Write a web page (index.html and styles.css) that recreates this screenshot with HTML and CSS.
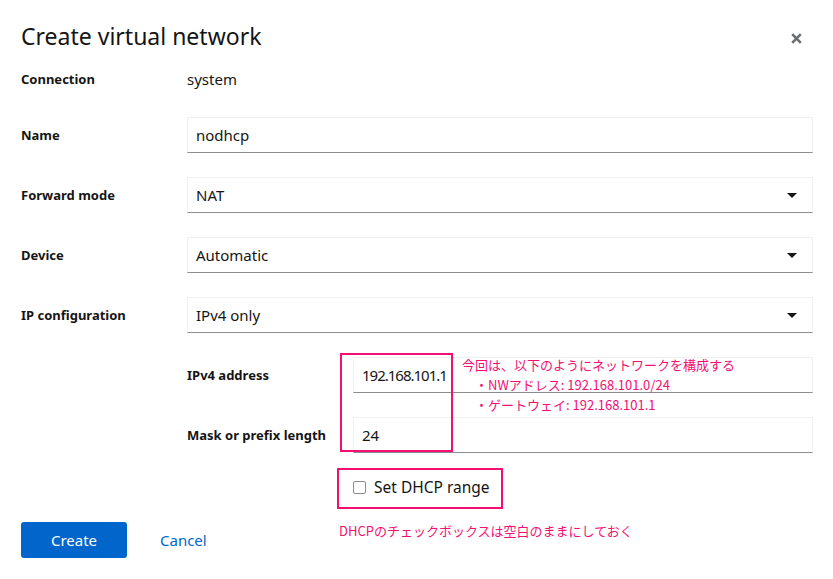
FILE: index.html
```html
<!DOCTYPE html>
<html lang="en">
<head>
    <meta charset="UTF-8">
    <meta name="viewport" content="width=device-width, initial-scale=1.0">
    <title>Create virtual network</title>
    <link rel="stylesheet" href="styles.css">
</head>
<body>
    <div class="modal">
        <div class="modal-header">
            <h1>Create virtual network</h1>
            <button class="close-btn" aria-label="Close">
                <svg width="11" height="11" viewBox="0 0 11 11">
                    <path d="M1.2 1.2 L9.8 9.8 M9.8 1.2 L1.2 9.8" stroke="#6a6e73" stroke-width="2.6" fill="none"/>
                </svg>
            </button>
        </div>

        <form class="form">
            <div class="row row-static">
                <label>Connection</label>
                <span class="value">system</span>
            </div>
            <div class="row">
                <label>Name</label>
                <input class="text-input" type="text" value="nodhcp">
            </div>
            <div class="row">
                <label>Forward mode</label>
                <div class="select">
                    <span>NAT</span>
                    <svg width="10" height="5" viewBox="0 0 10 5"><path d="M0 0 H10 L5 5 Z" fill="#151515"/></svg>
                </div>
            </div>
            <div class="row">
                <label>Device</label>
                <div class="select">
                    <span>Automatic</span>
                    <svg width="10" height="5" viewBox="0 0 10 5"><path d="M0 0 H10 L5 5 Z" fill="#151515"/></svg>
                </div>
            </div>
            <div class="row">
                <label>IP configuration</label>
                <div class="select">
                    <span>IPv4 only</span>
                    <svg width="10" height="5" viewBox="0 0 10 5"><path d="M0 0 H10 L5 5 Z" fill="#151515"/></svg>
                </div>
            </div>

            <div class="sub-form">
                <div class="row">
                    <label>IPv4 address</label>
                    <input class="text-input num" type="text" value="192.168.101.1">
                </div>
                <div class="row">
                    <label>Mask or prefix length</label>
                    <input class="text-input" type="text" value="24">
                </div>
                <div class="row row-check">
                    <span></span>
                    <label class="checkbox"><span class="box"></span>Set DHCP range</label>
                </div>
            </div>
        </form>

        <div class="modal-footer">
            <button class="btn-primary">Create</button>
            <button class="btn-link">Cancel</button>
        </div>

        <!-- annotations drawn on top of the screenshot -->
        <div class="mark mark-ip"></div>
        <div class="mark mark-dhcp"></div>
        <div class="note note-ip">
            <div>今回は、以下のようにネットワークを構成する</div>
            <div>　・NWアドレス: 192.168.101.0/24</div>
            <div>　・ゲートウェイ: 192.168.101.1</div>
        </div>
        <div class="note note-dhcp">DHCPのチェックボックスは空白のままにしておく</div>
    </div>
</body>
</html>
```

FILE: styles.css
```css
body {
    margin: 0;
    background-color: white;
    color: #151515;
    font-family: "Noto Sans", "Open Sans", sans-serif;
    font-size: 16px;
}
.modal {
    position: relative;
    width: 833px;
    height: 579px;
    box-sizing: border-box;
    padding: 21px 20px 0 21px;
}
.modal-header {
    display: flex;
    justify-content: space-between;
    align-items: flex-start;
    margin-bottom: 12px;
}
.modal-header h1 {
    margin: 0;
    font-size: 23px;
    line-height: 30px;
    font-weight: 400;
}
.close-btn {
    background: none;
    border: none;
    padding: 0 11px 0 0;
    margin-top: 12px;
    cursor: pointer;
    line-height: 0;
}
.form {
    display: flex;
    flex-direction: column;
    gap: 24px;
}
.row {
    display: grid;
    grid-template-columns: 166px 1fr;
    align-items: center;
    min-height: 36px;
}
.row label {
    font-size: 13px;
    font-weight: 700;
}
.row-static {
    min-height: 30px;
    padding-top: 1px;
    margin-bottom: -1px;
}
.row-static .value {
    font-size: 15px;
}
.text-input,
.select {
    box-sizing: border-box;
    height: 36px;
    width: 100%;
    border: 1px solid #f0f0f0;
    border-bottom-color: #8a8d90;
    padding: 0 8px;
    font-family: inherit;
    font-size: 15px;
    color: #151515;
    background: white;
}
.text-input.num {
    letter-spacing: -1px;
}
.select {
    display: flex;
    align-items: center;
    justify-content: space-between;
    padding-right: 15px;
}
.sub-form {
    display: flex;
    flex-direction: column;
    gap: 24px;
    margin-left: 166px;
}
.row-check {
    min-height: 0;
    height: 20px;
}
.row .checkbox {
    display: flex;
    align-items: center;
    gap: 8px;
    font-size: 15.5px;
    line-height: 20px;
    font-weight: 400;
}
.checkbox .box {
    width: 11px;
    height: 11px;
    border: 1px solid #8a8d90;
    border-radius: 2px;
}
.modal-footer {
    display: flex;
    align-items: center;
    gap: 17px;
    margin-top: 25px;
}
.btn-primary {
    width: 106px;
    height: 36px;
    border: none;
    border-radius: 3px;
    background-color: #0066cc;
    color: white;
    font-family: inherit;
    font-size: 15px;
    cursor: pointer;
}
.btn-link {
    background: none;
    border: none;
    padding: 6px 16px;
    color: #0066cc;
    font-family: inherit;
    font-size: 15px;
    cursor: pointer;
}
.mark {
    position: absolute;
    box-sizing: border-box;
    border: 2px solid #f50f72;
}
.mark-ip {
    left: 340px;
    top: 353px;
    width: 113px;
    height: 99px;
}
.mark-dhcp {
    left: 337px;
    top: 468px;
    width: 166px;
    height: 41px;
}
.note {
    position: absolute;
    color: #f50f72;
    font-family: "Noto Sans CJK JP", sans-serif;
    font-size: 13px;
    line-height: 20px;
}
.note-ip {
    left: 462px;
    top: 355px;
}
.note-dhcp {
    left: 339px;
    top: 521px;
}
```
